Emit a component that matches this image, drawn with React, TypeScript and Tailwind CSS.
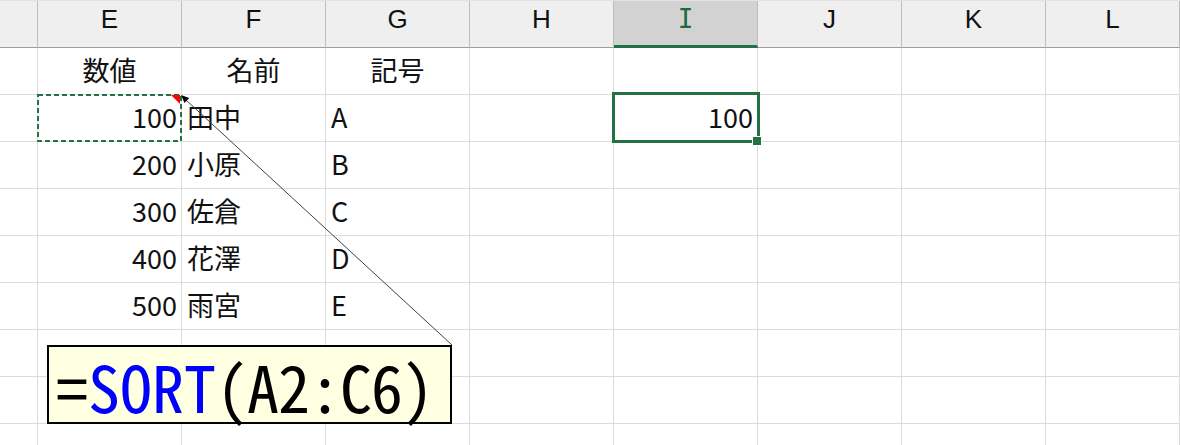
import React from "react";

const COLS = ["", "E", "F", "G", "H", "I", "J", "K", "L"];

type Cell = { text: string; align: "left" | "right" | "center" };

const data: Record<string, Cell>[] = [
  {
    E: { text: "数値", align: "center" },
    F: { text: "名前", align: "center" },
    G: { text: "記号", align: "center" },
  },
  {
    E: { text: "100", align: "right" },
    F: { text: "田中", align: "left" },
    G: { text: "A", align: "left" },
    I: { text: "100", align: "right" },
  },
  {
    E: { text: "200", align: "right" },
    F: { text: "小原", align: "left" },
    G: { text: "B", align: "left" },
  },
  {
    E: { text: "300", align: "right" },
    F: { text: "佐倉", align: "left" },
    G: { text: "C", align: "left" },
  },
  {
    E: { text: "400", align: "right" },
    F: { text: "花澤", align: "left" },
    G: { text: "D", align: "left" },
  },
  {
    E: { text: "500", align: "right" },
    F: { text: "雨宮", align: "left" },
    G: { text: "E", align: "left" },
  },
  {},
  {},
  {},
];

function widthClass(i: number) {
  if (i === 0) return "w-[38px] shrink-0";
  if (i === COLS.length - 1) return "flex-1";
  return "w-[144px] shrink-0";
}

export default function App() {
  return (
    <div className="relative w-[1180px] h-[445px] overflow-hidden bg-white">
      {/* header */}
      <div className="flex h-[48px] bg-[#efefef] border-t border-[#e3e3e3]">
        {COLS.map((c, i) => {
          const sel = c === "I";
          return (
            <div
              key={i}
              className={
                widthClass(i) +
                " flex justify-center pt-[3px] text-[26px] leading-[30px] border-r border-r-[#bcbcbc] " +
                (sel
                  ? "bg-[#d2d2d2] text-[#1d6a3f] border-b-[3px] border-b-[#217346] [font-family:'DejaVu_Sans_Mono',monospace] text-[25px]"
                  : "text-[#111] border-b border-b-[#9e9e9e] [font-family:'Liberation_Sans',Arial,sans-serif]")
              }
            >
              {c}
            </div>
          );
        })}
      </div>
      {/* rows */}
      {data.map((row, r) => (
        <div key={r} className="flex h-[47px]">
          {COLS.map((c, i) => {
            const cell = row[c];
            return (
              <div
                key={i}
                className={
                  widthClass(i) +
                  " flex items-center border-r border-b border-[#dcdcdc] text-[27px] text-[#111] [font-family:'Noto_Sans_CJK_JP',sans-serif] " +
                  (cell
                    ? cell.align === "right"
                      ? "justify-end pr-[4px]"
                      : cell.align === "center"
                      ? "justify-center"
                      : "justify-start pl-[5px]"
                    : "")
                }
              >
                {cell ? <span className="leading-none -mt-[3px]">{cell.text}</span> : null}
              </div>
            );
          })}
        </div>
      ))}

      {/* copy marquee, comment indicator, arrow */}
      <svg
        className="absolute left-0 top-0 pointer-events-none"
        width={1180}
        height={445}
        viewBox="0 0 1180 445"
      >
        <rect
          x={38}
          y={95}
          width={143}
          height={46}
          fill="none"
          stroke="#217346"
          strokeWidth={2}
          strokeDasharray="5 3"
        />
        <polygon points="171,95 180,95 180,104" fill="#ff0000" />
        <line x1={452} y1={345} x2={186} y2={100} stroke="#404040" strokeWidth={1} />
        <polygon points="181,95 189.3,97.9 184.5,103" fill="#000" />
      </svg>

      {/* active cell */}
      <div className="absolute left-[612px] top-[92px] w-[148px] h-[51px] border-[3px] border-[#217346] pointer-events-none" />
      <div className="absolute left-[752px] top-[136px] w-[10px] h-[10px] bg-[#217346] border border-white" />

      {/* comment box */}
      <div className="absolute left-[47px] top-[345px] w-[405px] h-[79px] border-2 border-black bg-[#ffffe1] pl-[7px] pt-[6px]">
        <div className="text-[64px] leading-[64px] whitespace-nowrap [font-family:'Noto_Sans_Mono_CJK_JP','DejaVu_Sans_Mono',monospace] text-black">
          <span>=</span>
          <span className="text-[#0000ff]">SORT</span>
          <span className="tracking-[-1px]">(A2:C6)</span>
        </div>
      </div>
    </div>
  );
}
